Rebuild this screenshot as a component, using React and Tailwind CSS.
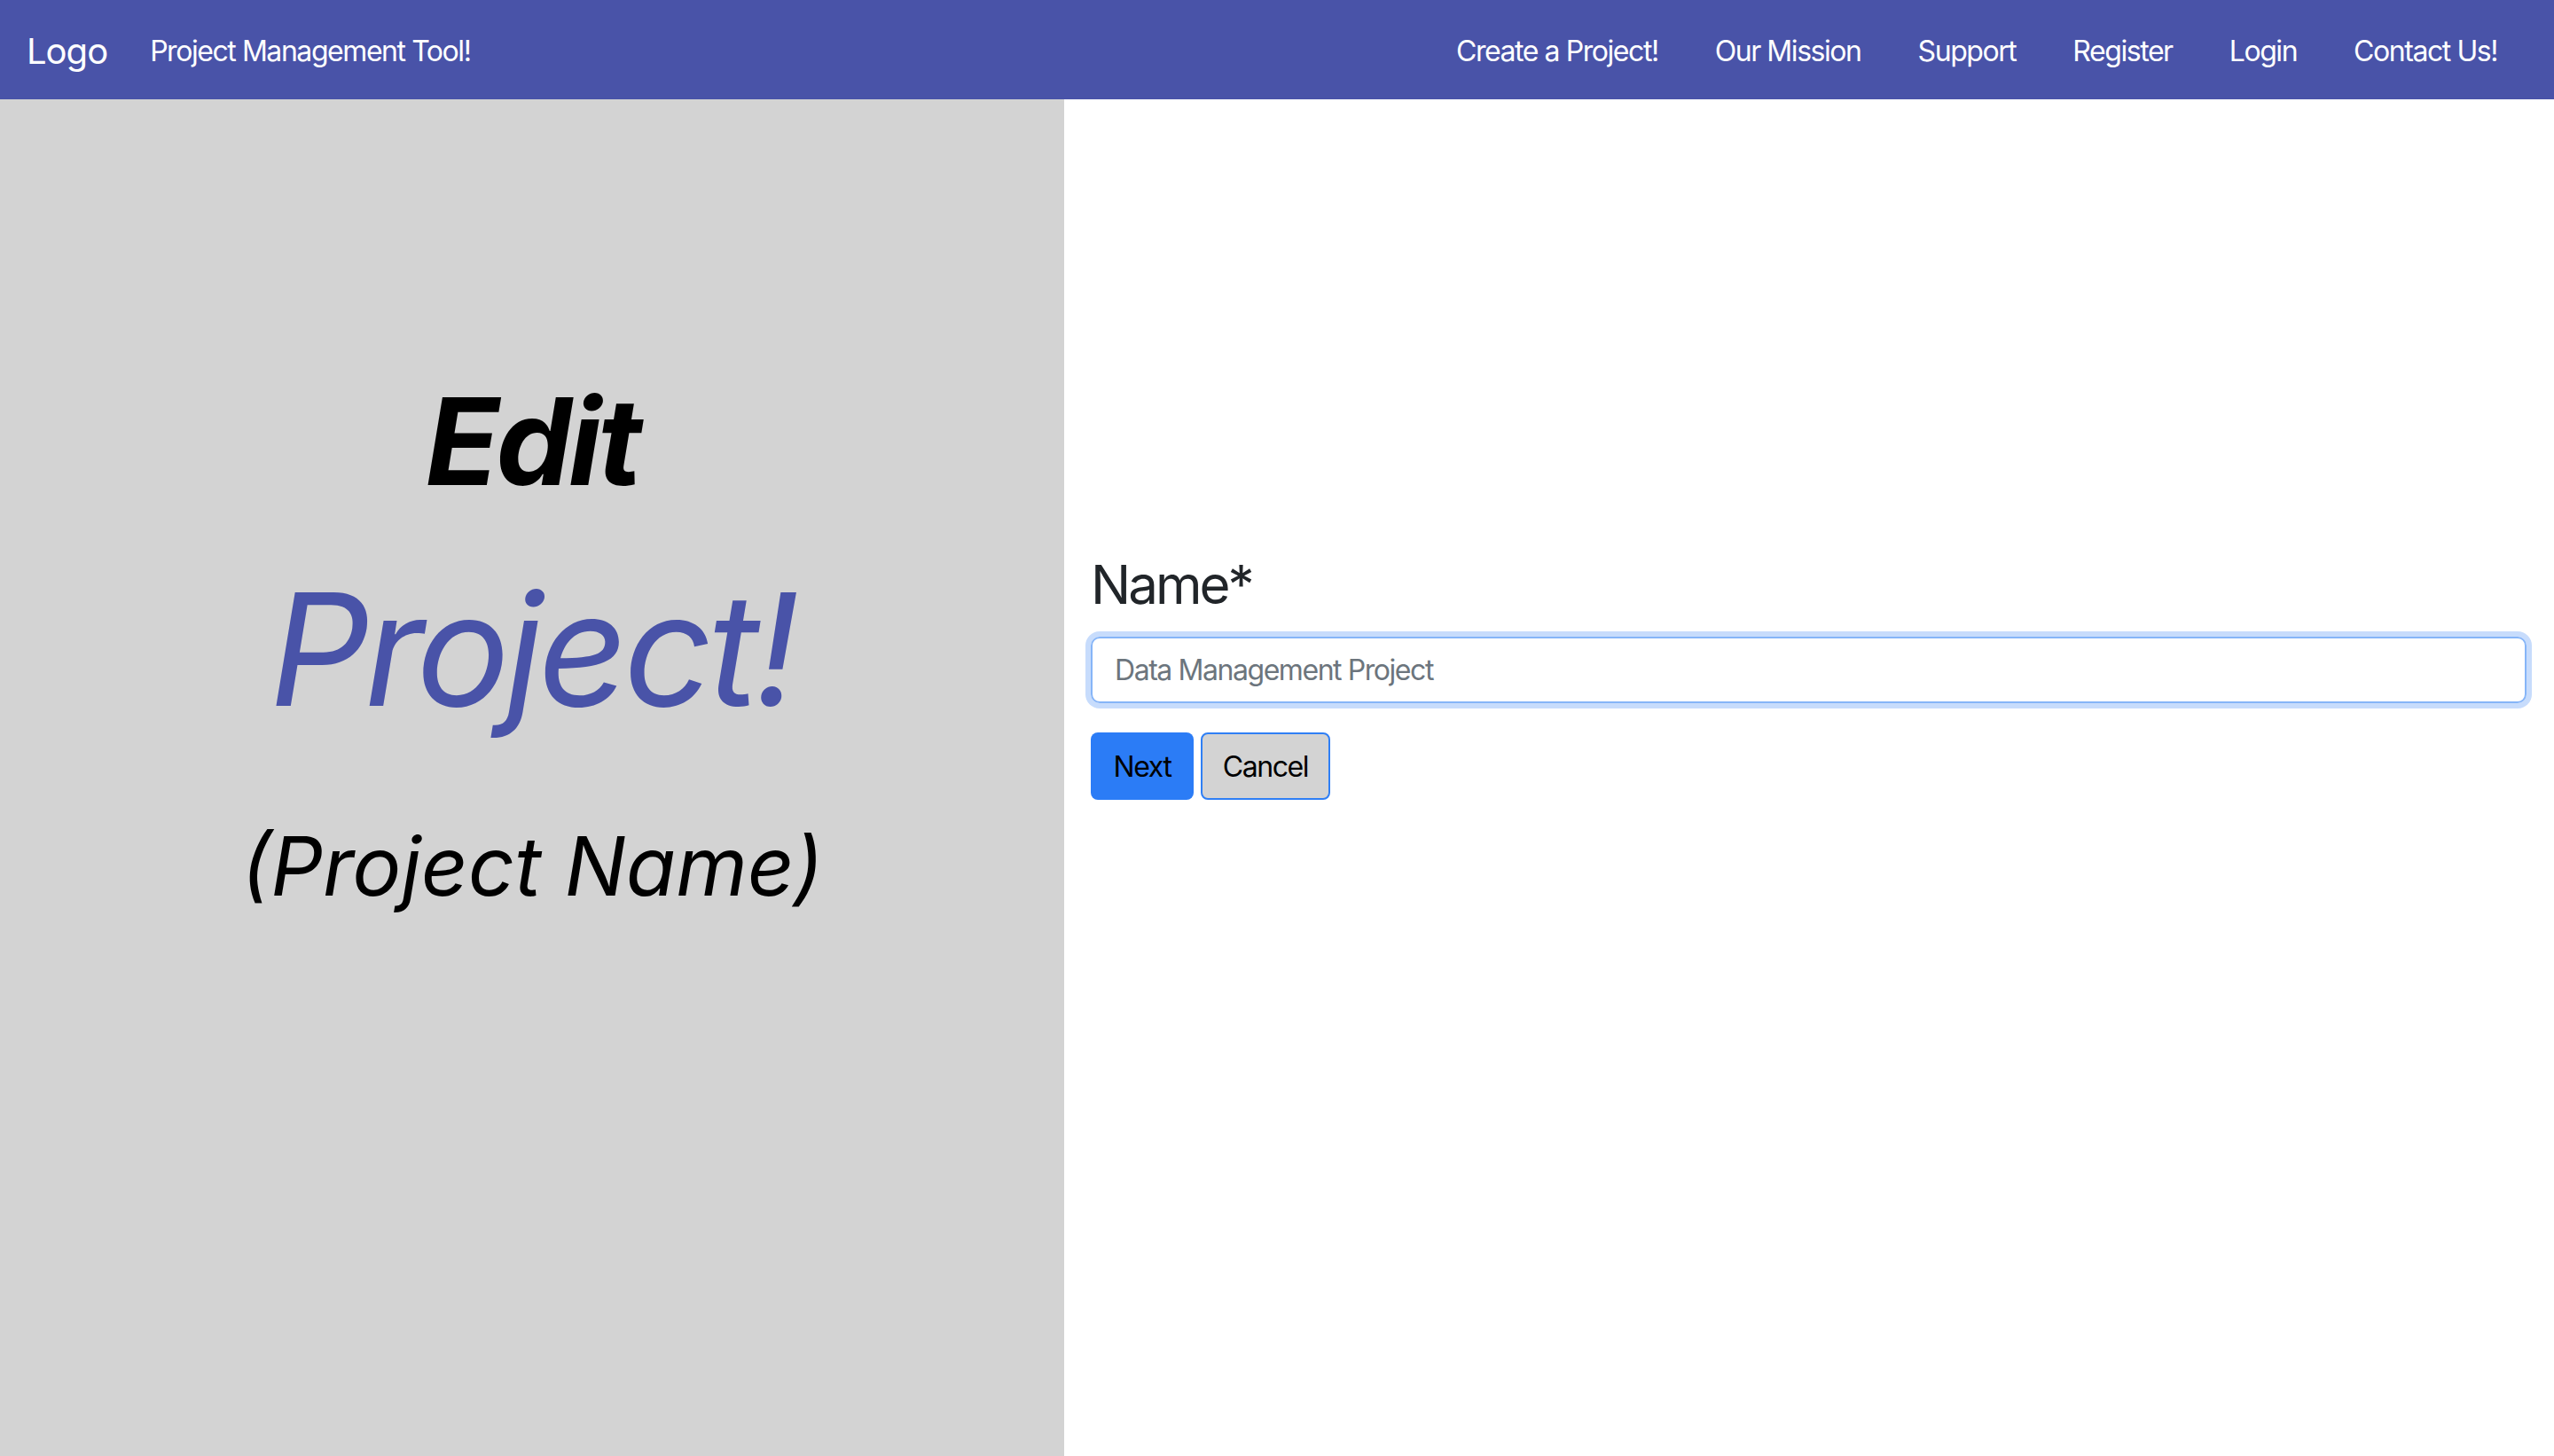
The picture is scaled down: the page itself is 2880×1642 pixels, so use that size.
import React from "react";

const links = ["Create a Project!", "Our Mission", "Support", "Register", "Login", "Contact Us!"];

export default function App() {
  return (
    <div className="min-h-screen flex flex-col bg-white font-['Inter',sans-serif]">
      {/* Navbar */}
      <nav className="h-[112px] shrink-0 flex items-center bg-[#4953a8] text-white pl-[30px] pr-[64px] pt-[3px]">
        <span className="text-[40px] leading-none tracking-[-0.025em]">Logo</span>
        <span className="ml-[48px] text-[32px] leading-none tracking-[-0.045em]">Project Management Tool!</span>
        <ul className="ml-auto flex items-center gap-[64px] text-[32px] leading-none tracking-[-0.045em]">
          {links.map((l) => (
            <li key={l}>{l}</li>
          ))}
        </ul>
      </nav>

      <div className="flex flex-1 h-[1530px]">
        {/* Left panel */}
        <div className="w-[1200px] shrink-0 bg-[#d3d3d3] flex flex-col items-center pt-[318px] italic">
          <h1 className="text-[136px] leading-none font-bold text-black tracking-[-0.028em]">Edit</h1>
          <h2 className="mt-[78px] text-[176px] leading-none text-[#4953a8] tracking-[-0.03em]">Project!</h2>
          <h3 className="mt-[111px] text-[92px] leading-none text-black">(Project Name)</h3>
        </div>

        {/* Form */}
        <div className="flex-1 pt-[517px] pl-[30px] pr-[31px]">
          <label className="block text-[60px] leading-none text-[#212529] tracking-[-0.05em]">Name*</label>
          <input
            type="text"
            placeholder="Data Management Project"
            className="mt-[29px] block w-full h-[75px] px-[25px] rounded-[10px] border-2 border-[#86b5f8] ring-[6px] ring-[#c7dcfc] outline-none text-[32px] tracking-[-0.045em] placeholder:text-[#6c757d]"
          />
          <div className="mt-[33px] flex gap-[8px]">
            <button className="w-[116px] h-[76px] pt-[2px] rounded-[8px] bg-[#2b7cf6] text-black text-[32px] tracking-[-0.045em]">
              Next
            </button>
            <button className="w-[146px] h-[76px] pt-[2px] rounded-[8px] bg-[#d3d3d3] border-2 border-[#2f7ff5] text-black text-[32px] tracking-[-0.045em]">
              Cancel
            </button>
          </div>
        </div>
      </div>
    </div>
  );
}
